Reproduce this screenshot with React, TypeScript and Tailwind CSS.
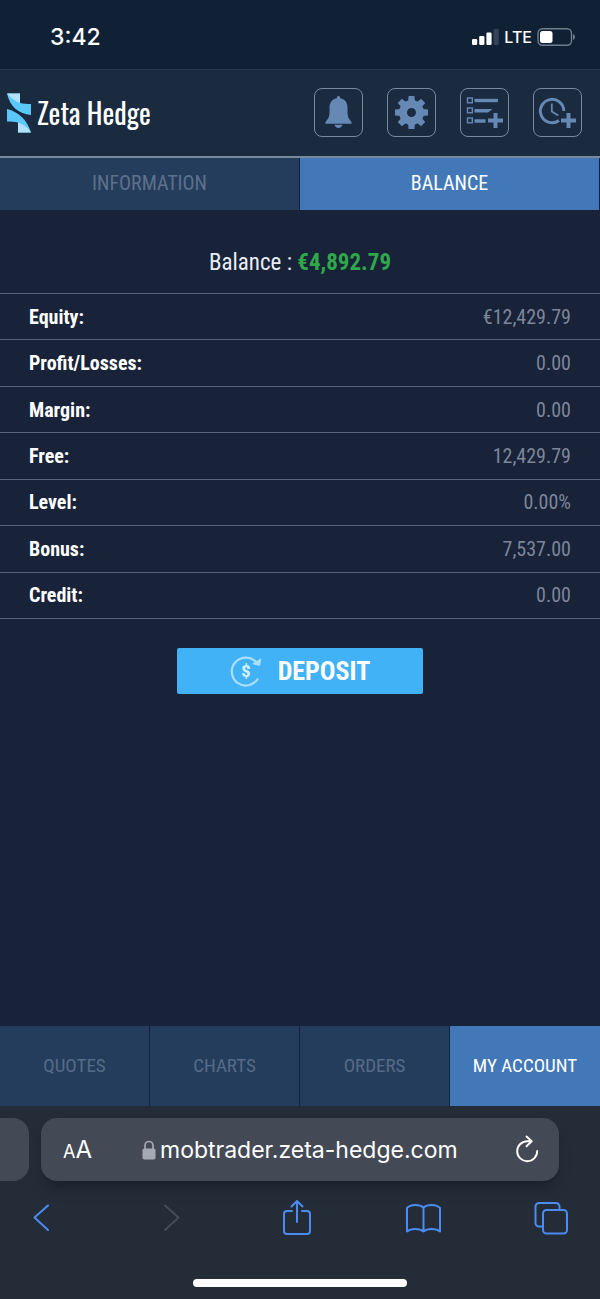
import React from 'react';

const condensed = "font-['Roboto_Condensed','Liberation_Sans_Narrow',Roboto,sans-serif]";

const rows = [
  { label: 'Equity:', value: '€12,429.79' },
  { label: 'Profit/Losses:', value: '0.00' },
  { label: 'Margin:', value: '0.00' },
  { label: 'Free:', value: '12,429.79' },
  { label: 'Level:', value: '0.00%' },
  { label: 'Bonus:', value: '7,537.00' },
  { label: 'Credit:', value: '0.00' },
];

const navItems = ['QUOTES', 'CHARTS', 'ORDERS', 'MY ACCOUNT'];

const gearAngles = [0, 45, 90, 135, 180, 225, 270, 315];

const StatusBar: React.FC = () => (
  <div className="h-[69px] shrink-0 bg-[#112135] flex items-center justify-between pl-[50px] pr-6 pt-1 text-white font-[Inter,sans-serif]">
    <span className="text-[23px] leading-7 font-medium">3:42</span>
    <div className="flex items-center gap-[5px]">
      <svg width="27" height="18" viewBox="0 0 27 18" fill="#fff">
        <rect x="0" y="11" width="5.2" height="6" rx="1.2" />
        <rect x="7.2" y="8" width="5.2" height="9" rx="1.2" />
        <rect x="14.4" y="4.5" width="5.2" height="12.5" rx="1.2" />
        <rect x="21.6" y="1" width="5.2" height="16" rx="1.2" fill="#34435a" />
      </svg>
      <span className="text-[16px] leading-5 font-medium">LTE</span>
      <svg width="39" height="18" viewBox="0 0 39 18">
        <rect x="1" y="0.8" width="33.5" height="16.4" rx="4.5" fill="none" stroke="#737e8c" strokeWidth="1.4" />
        <rect x="3" y="3" width="12.5" height="12" rx="2.5" fill="#fff" />
        <path d="M36 6.2c2.6.8 2.6 4.8 0 5.6z" fill="#737e8c" />
      </svg>
    </div>
  </div>
);

const Logo: React.FC = () => (
  <a href="#" className="flex items-center gap-[6px] text-white">
    <svg width="24" height="40" viewBox="0 0 24 40">
      <path d="M0 0.5h13v9.5c3 .7 7 1 11 1v11C12 21 3 14 0 0.5z" fill="#5ac8fa" />
      <path d="M0 0.5h13v9.5C8 8 3 4.5 0 0.5z" fill="#b3e1fb" />
      <path d="M0 16c12 3 20 11 24 23.5H11v-10C8 28.8 4 28.500 0 28.500z" fill="#5ac8fa" />
      <path d="M11 29.500c5 1.500 10 5 13 10H11z" fill="#b3e1fb" />
    </svg>
    <span className="font-[Oswald,'Roboto_Condensed','Liberation_Sans_Narrow',sans-serif] text-[28px] leading-8">Zeta Hedge</span>
  </a>
);

const IconButton: React.FC<{ label: string; children: React.ReactNode }> = ({ label, children }) => (
  <button aria-label={label} className="w-[49px] h-[49px] rounded-lg border border-[#7b899c] flex items-center justify-center">
    <svg width="47" height="47" viewBox="0 0 47 47" fill="#6688b4">
      {children}
    </svg>
  </button>
);

const Header: React.FC = () => (
  <header className="h-[89px] shrink-0 bg-[#1a2b40] border-t border-t-[#263b50] border-b-2 border-b-[#78899d] pb-px flex items-center justify-between pl-[7px] pr-[18px]">
    <Logo />
    <div className="flex gap-6">
      <IconButton label="Notifications">
        <path d="M23.5 7c-1.2 0-1.700.9-1.700 2.200C16.500 10 14.500 14.200 14.500 18.500v5c0 4-1.300 6.500-4 9.500v1.800h26V33c-2.700-3-4-5.500-4-9.500v-5c0-4.300-2-8.500-7.300-9.300 0-1.300-.5-2.200-1.700-2.200zM19.500 35.800h8c-.4 2-2 3.200-4 3.200s-3.600-1.200-4-3.200z" />
      </IconButton>
      <IconButton label="Settings">
        <circle cx="23.5" cy="23.5" r="8.5" fill="none" stroke="#6688b4" strokeWidth="8" />
        {gearAngles.map((angle) => (
          <path key={angle} d="M20.600 7h5.800l.6 6h-7z" transform={`rotate(${angle} 23.5 23.5)`} />
        ))}
      </IconButton>
      <IconButton label="Add to list">
        <g fill="none" stroke="#6688b4" strokeWidth="1.4">
          <rect x="6.5" y="9" width="4.8" height="4.8" />
          <rect x="6.5" y="19" width="4.8" height="4.8" />
          <rect x="6.5" y="29" width="4.8" height="4.8" />
        </g>
        <rect x="13.5" y="9.8" width="23.5" height="3.4" />
        <path d="M13.5 20h18l-4.500 3.400H13.500zM13.500 30.300h11v3.400h-11z" />
        <path d="M32.500 24h4v5.500h5.500v4h-5.500V39h-4v-5.500H27v-4h5.500z" />
      </IconButton>
      <IconButton label="Add timer">
        <path d="M29.800 22A11.700 11.700 0 1 0 25 31.500" fill="none" stroke="#6688b4" strokeWidth="3" />
        <path d="M17.800 14.500v8l6.500 4" fill="none" stroke="#6688b4" strokeWidth="1.8" />
        <path d="M32.500 24h4v5.500h5.500v4h-5.500V39h-4v-5.500H27v-4h5.500z" />
      </IconButton>
    </div>
  </header>
);

const AddressBar: React.FC = () => (
  <div className="flex gap-3">
    <div className="w-[29px] h-[63px] rounded-r-2xl bg-[#444a55]"></div>
    <div className="flex-1 mr-[41px] h-[63px] rounded-2xl bg-[#444a55] shadow-lg shadow-black/20 flex items-center justify-between pl-[22px] pr-[19px] text-white">
      <button aria-label="Page settings" className="leading-7 pt-0.5">
        <span className="text-[18px]">A</span>
        <span className="text-[24px]">A</span>
      </button>
      <div className="flex items-center gap-1">
        <svg width="14" height="20" viewBox="0 0 14 20">
          <rect x="0.5" y="8.5" width="13" height="11" rx="1.8" fill="#a5a9b4" />
          <path d="M3 9V5.500a4 4 0 0 1 8 0V9" fill="none" stroke="#a5a9b4" strokeWidth="1.7" />
        </svg>
        <input aria-label="Address" defaultValue="mobtrader.zeta-hedge.com" className="w-[304px] bg-transparent text-[23px] leading-8 outline-none" />
      </div>
      <button aria-label="Reload">
        <svg width="26" height="30" viewBox="0 0 26 30" fill="none" stroke="#fff" strokeWidth="1.9" strokeLinecap="round" strokeLinejoin="round">
          <path d="M17 6.200H13A10 10 0 1 0 23.200 16M12.500 1.500l5.200 4.800-5.200 5" />
        </svg>
      </button>
    </div>
  </div>
);

const ToolButton: React.FC<{ label: string; className?: string; children: React.ReactNode }> = ({ label, className, children }) => (
  <button aria-label={label} className={className}>
    <svg width="36" height="38" viewBox="0 0 36 38" fill="none" stroke="currentColor" strokeWidth="2" strokeLinecap="round" strokeLinejoin="round">
      {children}
    </svg>
  </button>
);

const BrowserBar: React.FC = () => (
  <footer className="h-[193px] shrink-0 bg-[#242c38] pt-3 font-[Inter,sans-serif]">
    <AddressBar />
    <div className="flex items-center justify-between mt-[18px] pl-6 pr-8 text-[#4a8cf2]">
      <ToolButton label="Back">
        <path d="M24 6.500L10.500 18.500 24 31" />
      </ToolButton>
      <ToolButton label="Forward" className="text-[#454c57]">
        <path d="M14 6.500L27.500 18.500 14 31" />
      </ToolButton>
      <ToolButton label="Share">
        <path d="M14 12H9a3 3 0 0 0-3 3V32a3 3 0 0 0 3 3h20a3 3 0 0 0 3-3V15a3 3 0 0 0-3-3h-5M19 23V2.500M13.500 7.500L19 2l5.500 5.500" />
      </ToolButton>
      <ToolButton label="Bookmarks">
        <path d="M18.500 8.500C14.500 5 5.500 5 2 9v23.500c4-3.500 12.500-3.500 16.500 0 4-3.500 12.500-3.500 16.500 0V9C31.500 5 22.500 5 18.500 8.500zM18.500 8.500v24" />
      </ToolButton>
      <ToolButton label="Tabs">
        <path d="M10 27.500H7a3.500 3.500 0 0 1-3.500-3.500V7.500A3.500 3.500 0 0 1 7 4h17a3.500 3.500 0 0 1 3.500 3.500v3" />
        <rect x="11" y="11" width="24" height="23.5" rx="3.5" />
      </ToolButton>
    </div>
    <div className="w-[214px] h-2 rounded-full bg-white mx-auto mt-[42px]"></div>
  </footer>
);

export default function App() {
  return (
    <div className={`min-h-screen flex flex-col bg-[#182238] ${condensed}`}>
      <StatusBar />
      <Header />
      <div className="h-[52px] shrink-0 grid grid-cols-2 text-[20px] leading-6">
        <button className="bg-[#243d5c] text-[#5d718c] border-r border-[#122341] pb-0.5">INFORMATION</button>
        <button className="bg-[#4278b7] text-white border-r border-[#122341] pb-0.5">BALANCE</button>
      </div>

      <main className="flex-1 flex flex-col items-center">
        <p className="h-[83px] pt-[22px] flex items-center text-[23px] leading-7 text-[#e8edf5]">
          <span>Balance : <strong className="font-bold text-[#2fa84a]">€4,892.79</strong></span>
        </p>
        <table className="w-full h-[326px] border-collapse border-b border-[#566479] text-[20px] leading-6">
          <tbody>
            {rows.map((row) => (
              <tr key={row.label} className="border-t border-[#566479]">
                <th scope="row" className="pl-[29px] text-left font-bold text-white">{row.label}</th>
                <td className="pr-[29px] text-right text-[#7d869a]">{row.value}</td>
              </tr>
            ))}
          </tbody>
        </table>
        <button className="mt-[29px] w-[246px] h-[46px] rounded-xs bg-[#42b2f6] text-white text-[26px] leading-8 font-bold flex items-center justify-center gap-4">
          <svg width="32" height="32" viewBox="0 0 32 32" fill="none" stroke="#a9dfff" strokeWidth="2.2">
            <path d="M26.500 7.500A14 14 0 1 0 28 23.500" />
            <path d="M31.500 3l-1.500 8-8-2z" fill="#a9dfff" stroke="none" />
            <text x="16" y="22" textAnchor="middle" fontFamily="Roboto" fontSize="16" fontWeight="900" fill="#d4f0ff" stroke="none">$</text>
          </svg>
          DEPOSIT
        </button>
      </main>

      <nav className="h-20 shrink-0 grid grid-cols-4 text-[19px] leading-6">
        {navItems.map((item) => (
          <button
            key={item}
            className={item === 'MY ACCOUNT' ? 'bg-[#4278b7] text-white' : 'bg-[#243d5c] text-[#566b87] border-r border-[#122341]'}
          >
            {item}
          </button>
        ))}
      </nav>
      <BrowserBar />
    </div>
  );
}
